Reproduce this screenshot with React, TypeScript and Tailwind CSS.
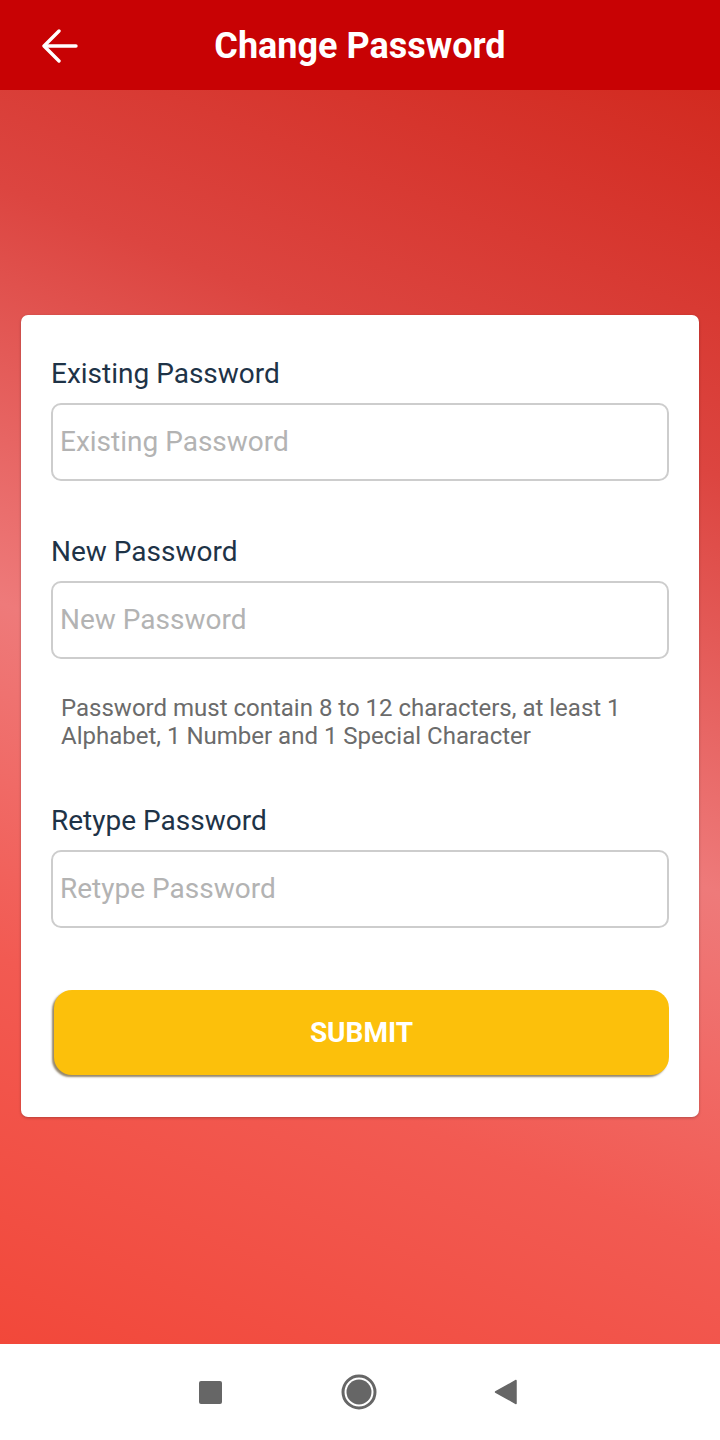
import React from "react";

function Field({ label, placeholder }: { label: string; placeholder: string }) {
  return (
    <div className="flex flex-col">
      <div className="text-[28px] leading-[32px] text-[#1e3347]">{label}</div>
      <div className="mt-[13px] h-[78px] rounded-[10px] border-2 border-[#cdcdcd] flex items-center px-[7px]">
        <span className="text-[28px] text-[#b3b3b3]">{placeholder}</span>
      </div>
    </div>
  );
}

export default function App() {
  return (
    <div
      className="w-[720px] h-[1440px] flex flex-col overflow-hidden"
      style={{ fontFamily: "Roboto, 'Liberation Sans', sans-serif" }}
    >
      <div className="h-[90px] bg-[#c80204] flex items-center relative shrink-0">
        <svg
          className="absolute left-[42px] top-[29px]"
          width="36"
          height="34"
          viewBox="0 0 36 34"
          fill="none"
          stroke="white"
          strokeWidth="3.4"
          strokeLinecap="round"
          strokeLinejoin="round"
        >
          <path d="M34 17H3" />
          <path d="M17 2L2 17L17 32" />
        </svg>
        <div className="w-full text-center text-white font-bold text-[36px] leading-none pt-[2px]">
          Change Password
        </div>
      </div>
      <div className="flex-1 bg-[linear-gradient(202deg,#d22a20_0%,#dc4540_25%,#ee7a7a_52%,#f25a52_75%,#f2483a_100%)] px-[21px] pt-[225px]">
        <div className="bg-white rounded-[7px] shadow-[0_1px_3px_rgba(0,0,0,0.25)] px-[30px] pt-[43px] pb-[42px] flex flex-col">
          <Field label="Existing Password" placeholder="Existing Password" />
          <div className="h-[55px]" />
          <Field label="New Password" placeholder="New Password" />
          <div className="mt-[35px] px-[10px] text-[24px] leading-[28px] text-[#6b6b6b]">
            Password must contain 8 to 12 characters, at least 1 Alphabet, 1 Number and 1 Special Character
          </div>
          <div className="h-[55px]" />
          <Field label="Retype Password" placeholder="Retype Password" />
          <div className="mt-[62px] ml-[3px] h-[85px] rounded-[18px] bg-[#fcc00b] shadow-[-2px_2px_2px_rgba(90,70,30,0.65)] flex items-center justify-center">
            <span className="text-white font-bold text-[28px]">SUBMIT</span>
          </div>
        </div>
      </div>
      <div className="h-[96px] bg-white shrink-0 flex items-center justify-center">
        <div className="flex items-center -ml-[3px]">
          <div className="w-[23px] h-[23px] rounded-[2px] bg-[#666666]" />
          <svg className="ml-[118px]" width="38" height="38" viewBox="0 0 38 38">
            <circle cx="19" cy="19" r="16" fill="none" stroke="#666666" strokeWidth="3" />
            <circle cx="19" cy="19" r="12.5" fill="#666666" />
          </svg>
          <svg className="ml-[116px]" width="24" height="26" viewBox="0 0 24 26">
            <path d="M22 1.5V24.5L1.5 13Z" fill="#666666" stroke="#666666" strokeWidth="1.5" strokeLinejoin="round" />
          </svg>
        </div>
      </div>
    </div>
  );
}
